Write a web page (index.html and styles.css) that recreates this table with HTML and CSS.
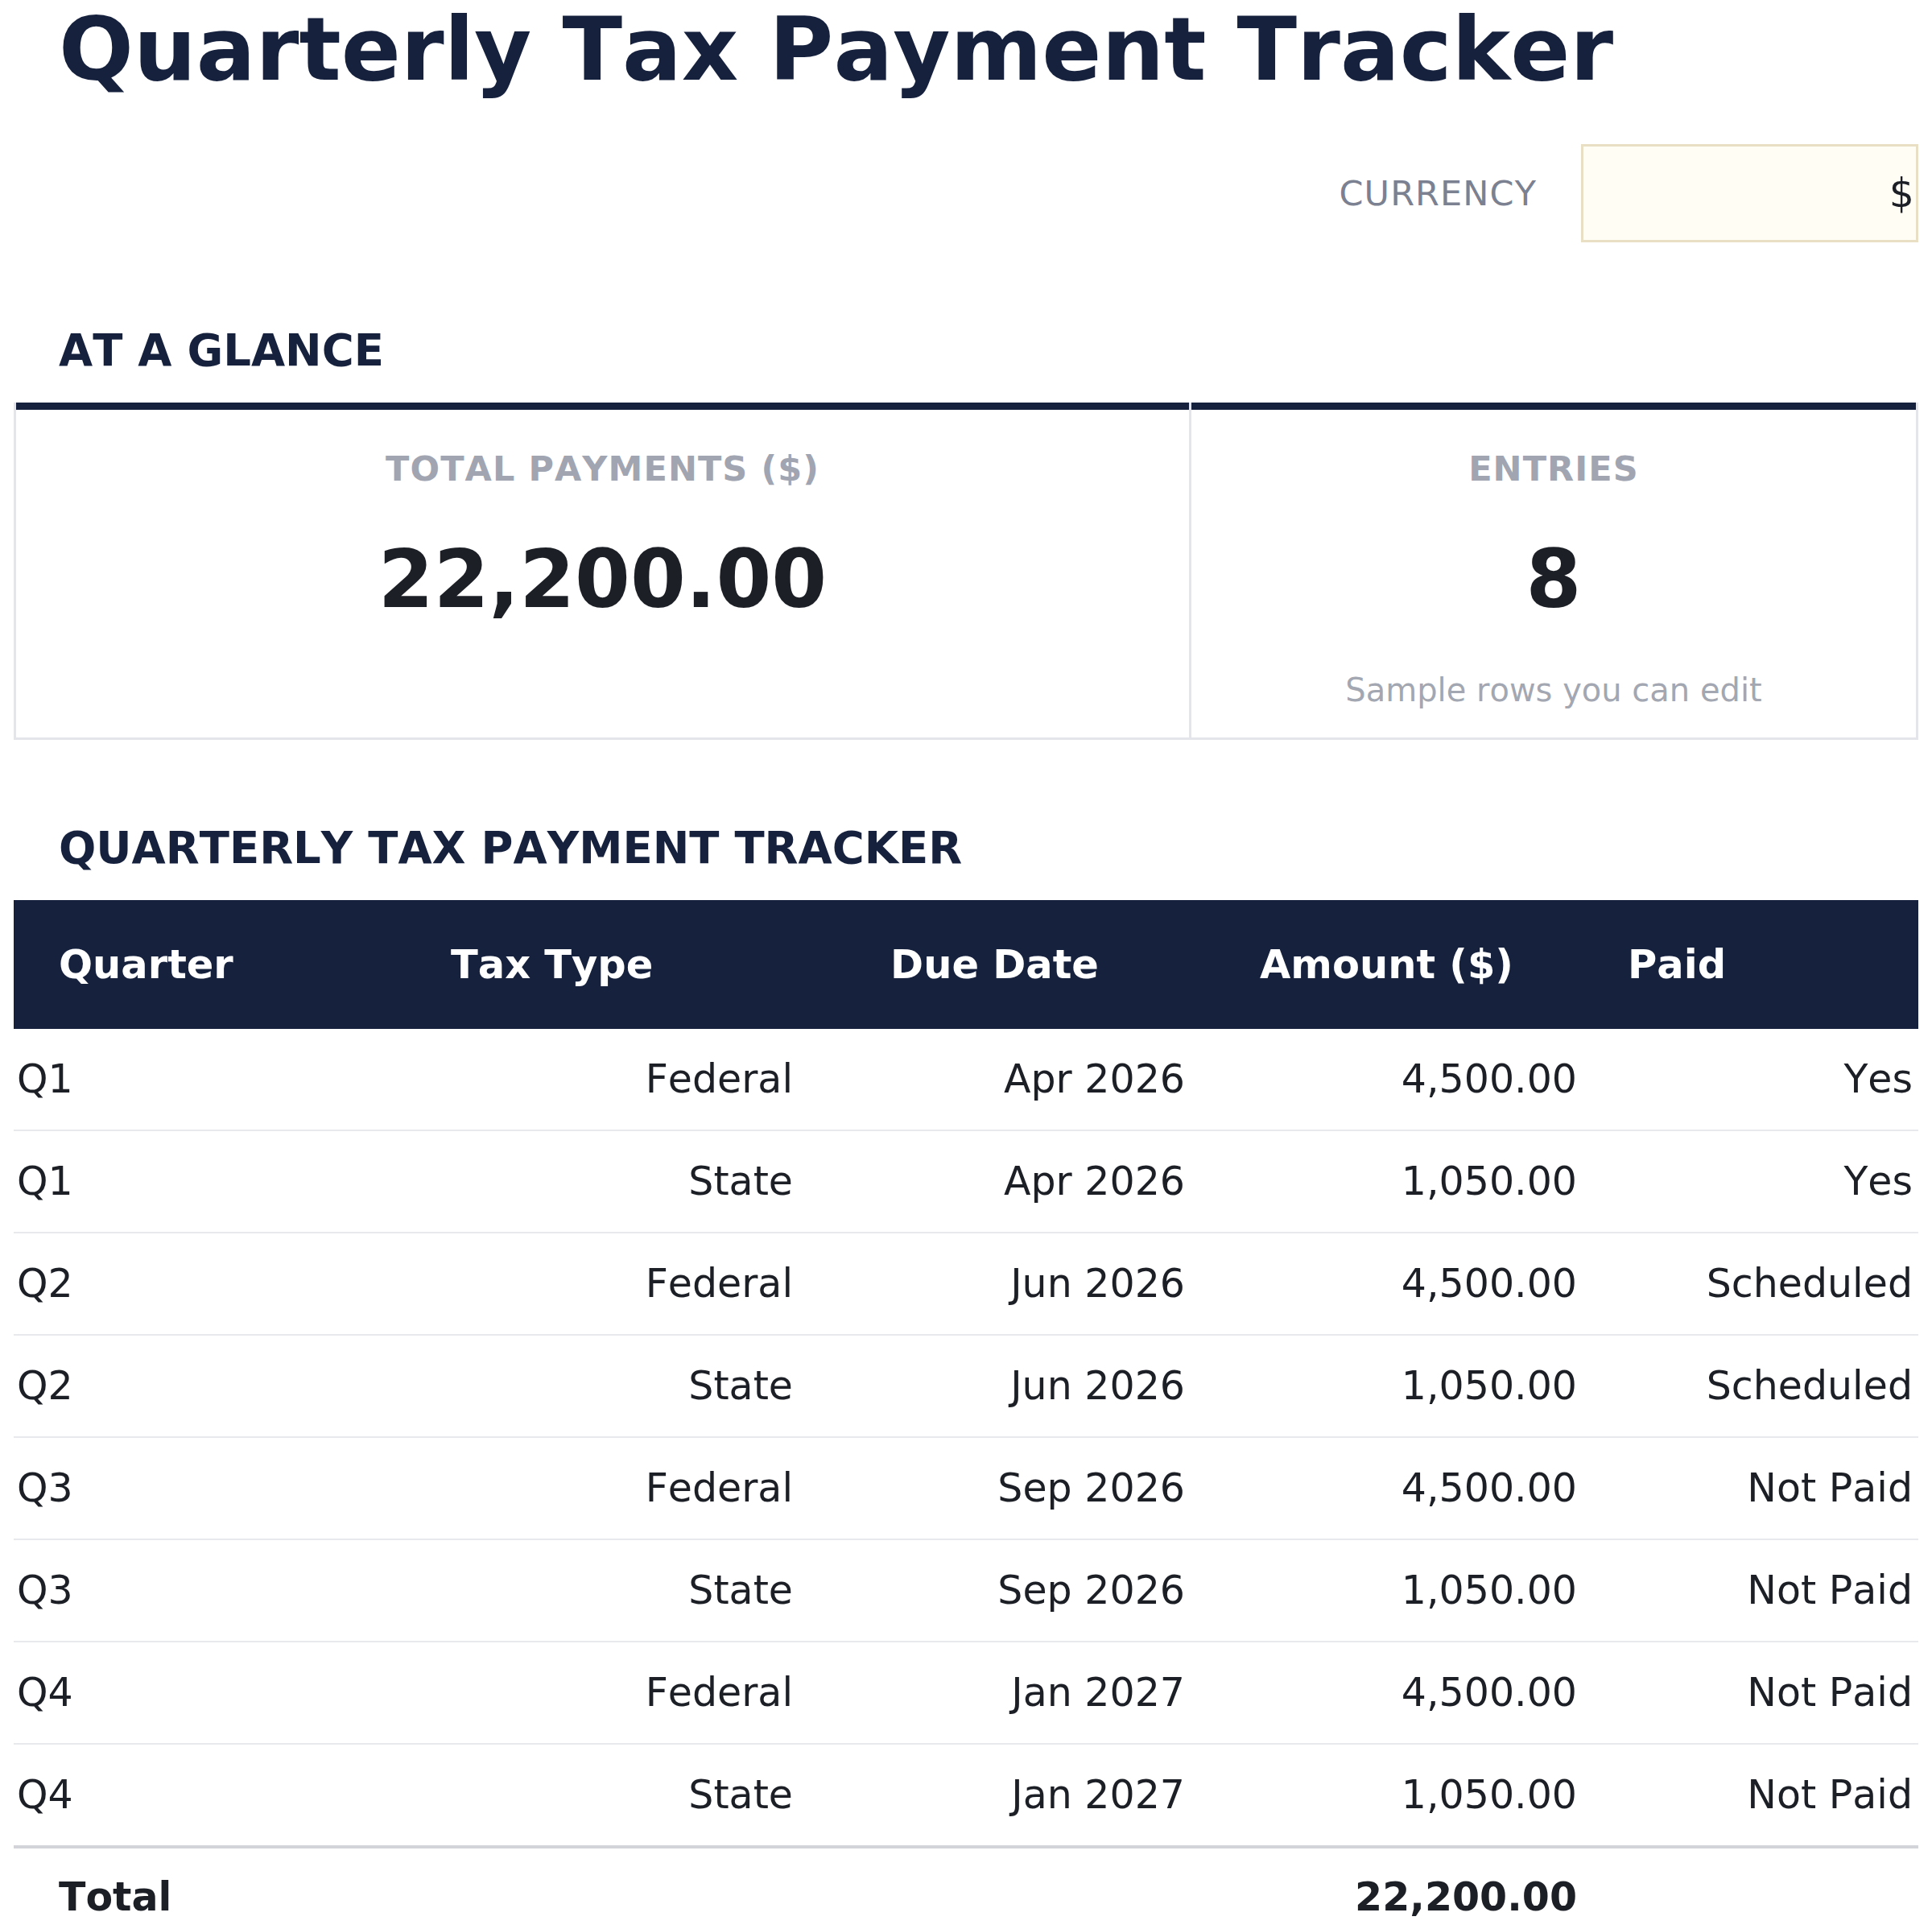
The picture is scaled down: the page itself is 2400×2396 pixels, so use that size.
FILE: index.html
```html
<!DOCTYPE html>
<html lang="en">
<head>
<meta charset="utf-8">
<title>Quarterly Tax Payment Tracker</title>
<link rel="stylesheet" href="styles.css">
</head>
<body>
<div class="page">
  <h1 class="title">Quarterly Tax Payment Tracker</h1>

  <div class="currency-row">
    <span class="currency-label">CURRENCY</span>
    <div class="currency-input">$</div>
  </div>

  <h2 class="section-title">AT A GLANCE</h2>
  <div class="cards">
    <div class="card card-first">
      <div class="card-label">TOTAL PAYMENTS ($)</div>
      <div class="card-value">22,200.00</div>
    </div>
    <div class="card">
      <div class="card-label">ENTRIES</div>
      <div class="card-value">8</div>
      <div class="card-note">Sample rows you can edit</div>
    </div>
  </div>

  <h2 class="section-title">QUARTERLY TAX PAYMENT TRACKER</h2>
  <table class="tracker">
    <colgroup>
      <col class="c1"><col class="c2"><col class="c3"><col class="c4"><col class="c5">
    </colgroup>
    <thead>
      <tr>
        <th class="th-left">Quarter</th>
        <th class="th-left">Tax Type</th>
        <th class="th-center">Due Date</th>
        <th class="th-center">Amount ($)</th>
        <th class="th-left">Paid</th>
      </tr>
    </thead>
    <tbody>
      <tr><td class="td-left">Q1</td><td>Federal</td><td>Apr 2026</td><td>4,500.00</td><td>Yes</td></tr>
      <tr><td class="td-left">Q1</td><td>State</td><td>Apr 2026</td><td>1,050.00</td><td>Yes</td></tr>
      <tr><td class="td-left">Q2</td><td>Federal</td><td>Jun 2026</td><td>4,500.00</td><td>Scheduled</td></tr>
      <tr><td class="td-left">Q2</td><td>State</td><td>Jun 2026</td><td>1,050.00</td><td>Scheduled</td></tr>
      <tr><td class="td-left">Q3</td><td>Federal</td><td>Sep 2026</td><td>4,500.00</td><td>Not Paid</td></tr>
      <tr><td class="td-left">Q3</td><td>State</td><td>Sep 2026</td><td>1,050.00</td><td>Not Paid</td></tr>
      <tr><td class="td-left">Q4</td><td>Federal</td><td>Jan 2027</td><td>4,500.00</td><td>Not Paid</td></tr>
      <tr class="last-row"><td class="td-left">Q4</td><td>State</td><td>Jan 2027</td><td>1,050.00</td><td>Not Paid</td></tr>
    </tbody>
    <tfoot>
      <tr>
        <td class="total-label">Total</td><td></td><td></td><td class="total-value">22,200.00</td><td></td>
      </tr>
    </tfoot>
  </table>
</div>
</body>
</html>
```

FILE: styles.css
```css
html, body {
  margin: 0;
  padding: 0;
  background: #ffffff;
}

body {
  font-family: "DejaVu Sans", "Liberation Sans", sans-serif;
  font-kerning: none;
  color: #1c1f26;
}

.page {
  padding: 0 17px;
}

.title {
  margin: -2px 0 0 0;
  padding-left: 56px;
  font-size: 109.3px;
  font-weight: bold;
  line-height: normal;
  color: #16213e;
}

.currency-row {
  display: flex;
  justify-content: flex-end;
  align-items: center;
  gap: 55px;
  margin-top: 54px;
}

.currency-label {
  font-size: 43px;
  letter-spacing: 0.025em;
  color: #7b8191;
}

.currency-input {
  box-sizing: border-box;
  width: 419px;
  height: 122px;
  border: 3px solid #e8dfc4;
  background: #fffdf4;
  display: flex;
  align-items: center;
  justify-content: flex-end;
  padding-right: 2px;
  font-size: 49px;
  color: #1c1f26;
}

.section-title {
  margin: 102px 0 33px 0;
  padding-left: 56px;
  font-size: 54.5px;
  font-weight: bold;
  line-height: normal;
  color: #16213e;
}

.cards {
  display: grid;
  grid-template-columns: 1460fr 906fr;
}

.card {
  box-sizing: border-box;
  border: 3px solid #e4e5ea;
  border-top: none;
  box-shadow: inset 0 9px 0 #16213e;
  padding: 57px 20px 30px 20px;
  text-align: center;
  min-height: 419px;
}

.card-first {
  border-right: none;
}

.card-label {
  font-size: 43px;
  font-weight: bold;
  letter-spacing: 0.025em;
  color: #a1a5b1;
  line-height: normal;
}

.card-value {
  margin-top: 55px;
  font-size: 99px;
  font-weight: bold;
  color: #1c1f26;
  line-height: normal;
}

.card-note {
  margin-top: 57px;
  font-size: 40px;
  color: #a3a7b1;
  line-height: normal;
}

.tracker {
  width: 100%;
  border-collapse: separate;
  border-spacing: 0;
  table-layout: fixed;
  font-size: 49px;
  margin-top: 1px;
}

.c1 { width: 487px; }
.c2 { width: 488px; }
.c3 { width: 487px; }
.c4 { width: 487px; }
.c5 { width: 417px; }

.tracker thead th {
  background: #16213e;
  color: #ffffff;
  font-weight: bold;
  font-size: 49.5px;
  height: 160px;
  padding: 0;
  white-space: nowrap;
}

.tracker .th-left {
  text-align: left;
  padding-left: 56px;
}

.tracker .th-center {
  text-align: center;
}

.tracker tbody td {
  height: 125px;
  padding: 0 7px 0 0;
  text-align: right;
  border-bottom: 2px solid #e8e9ed;
  white-space: nowrap;
}

.tracker tbody td.td-left {
  text-align: left;
  padding: 0 0 0 4px;
}

.tracker tbody tr.last-row td {
  border-bottom: 4px solid #d2d4da;
}

.tracker tfoot td {
  height: 120px;
  padding: 0 7px 0 0;
  font-weight: bold;
  text-align: right;
}

.tracker tfoot td.total-label {
  text-align: left;
  padding: 0 0 0 56px;
}
```
